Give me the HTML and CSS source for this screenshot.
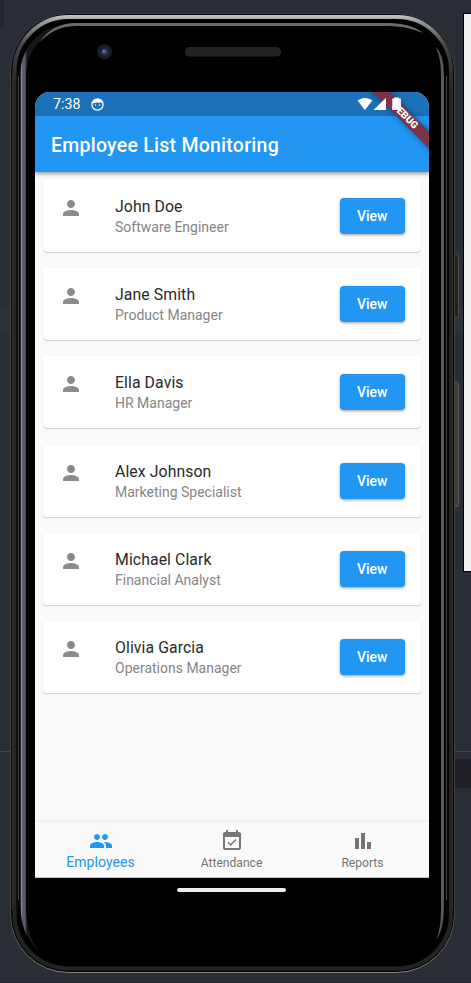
FILE: index.html
```html
<!DOCTYPE html>
<html lang="en">
<head>
<meta charset="utf-8">
<title>Employee List Monitoring</title>
<link rel="stylesheet" href="styles.css">
</head>
<body>
<svg class="device" width="471" height="983" viewBox="0 0 471 983" aria-hidden="true">
  <defs>
    <linearGradient id="rim" gradientUnits="userSpaceOnUse" x1="0" y1="13" x2="0" y2="973">
      <stop offset="0" stop-color="#3c3c3c"/><stop offset=".06" stop-color="#454443"/><stop offset=".93" stop-color="#454443"/><stop offset="1" stop-color="#85827e"/>
    </linearGradient>
    <linearGradient id="shine" gradientUnits="userSpaceOnUse" x1="0" y1="16" x2="0" y2="90">
      <stop offset="0" stop-color="#bfc4c2"/><stop offset=".06" stop-color="#9b9f9d"/><stop offset=".4" stop-color="#444"/><stop offset="1" stop-color="#232323"/>
    </linearGradient>
    <linearGradient id="left" gradientUnits="userSpaceOnUse" x1="20" y1="0" x2="27" y2="0">
      <stop offset="0" stop-color="#3c3a38"/><stop offset=".2" stop-color="#8c8883"/><stop offset=".4" stop-color="#575a68"/><stop offset=".7" stop-color="#5b5e6d"/><stop offset="1" stop-color="#15171b"/>
    </linearGradient>
  </defs>
  <rect width="471" height="983" fill="#292d36"/>
  <rect width="4" height="29" fill="#23262e"/>
  <rect y="307" width="471" height="25" fill="#2d313c"/>
  <path d="M0 751.5H471" stroke="#41454d"/>
  <path d="M450 759H471V788H450z" fill="#202126"/>
  <path d="M0 982.5H471" stroke="#202329"/>
  <rect x="463" y="13" width="8" height="559" fill="#000"/>
  <rect x="464" y="14" width="7" height="557" fill="#f0f0f0"/>
  <rect x="453.500" y="254.500" width="5" height="63" rx="2" fill="#20201f" stroke="#514e4a"/>
  <rect x="453.500" y="382.500" width="5" height="124" rx="1" fill="#3d3c3a" stroke="#5b5854"/>
  <rect x="10.5" y="13.5" width="444" height="959" rx="58" fill="#050505" stroke="url(#rim)"/>
  <rect x="14.5" y="17" width="436.500" height="951.500" rx="54" fill="none" stroke="url(#shine)" stroke-width="4"/>
  <path d="M12.500 76V910M452.500 76V910" stroke="#343332"/>
  <path d="M18.500 76V900M446.500 76V900" stroke="#454543"/>
  <rect x="20" y="20" width="425.500" height="946" rx="49" fill="#000"/>
  <path d="M40 952C28 941 20.500 928 20.500 904V74C20.500 45 44 23 75 23H384C400 23 413 25 423 33C408 27 400 26 384 26H76C49 26 26 46 26 77V904C26 928 31 942 40 952z" fill="url(#left)"/>
  <path d="M39 43C48 29 61 23 76 23H384C400 23 413 25 423 33C408 27 400 26 384 26H77C60 26 49 32 39 43z" fill="#686974"/>
  <path d="M435.500 47C442 53 444 62 444 77V904C444 921 442 932 436 940C440 931 441 922 441 904V77C441 65 440 56 435.500 47z" fill="#55565f"/>
  <circle cx="104.500" cy="51.800" r="7.500" fill="#1c1d20"/>
  <circle cx="104.500" cy="51.800" r="4.300" fill="#22284a"/>
  <circle cx="104.500" cy="51.800" r="2.500" fill="#39457c"/>
  <circle cx="103.800" cy="51" r="1" fill="#8592c4"/>
  <rect x="185" y="47" width="96" height="9.500" rx="4.500" fill="#222423"/>
</svg>

<svg class="defs" width="0" height="0" aria-hidden="true">
  <symbol id="person" viewBox="0 0 24 24"><path d="M12 12c2.210 0 4-1.790 4-4s-1.790-4-4-4-4 1.790-4 4 1.790 4 4 4zm0 2c-2.670 0-8 1.340-8 4v2h16v-2c0-2.660-5.330-4-8-4z"/></symbol>
</svg>

<div class="screen">
  <div class="ribbon-clip"><div class="ribbon">DEBUG</div></div>
  <div class="status">
    <span class="time">7:38</span>
    <svg class="face" width="13" height="13" viewBox="0 0 13 13"><circle cx="6.500" cy="6.500" r="5.600" fill="none" stroke="#fff" stroke-width="1.300"/><path d="M1 5.500C1.500 2.500 3.500 1 6.500 1S11.500 2.500 12 5.500L9.500 4.300 8 5 6.500 4.300 4 5z" fill="#fff"/><circle cx="4.500" cy="7" r=".7" fill="#fff"/><circle cx="8.500" cy="7" r=".7" fill="#fff"/></svg>
    <svg class="signals" width="46" height="14" viewBox="0 0 46 14" fill="#fff"><path d="M.5 3.500C4.800 0 11 0 15.300 3.500L7.900 12.900z"/><path d="M29 .8V13H16.500z"/><path d="M35.300 2.300V1.600H37V.5H42V1.600H43.900V13H35.300z"/></svg>
  </div>
  <header class="appbar"><h1>Employee List Monitoring</h1></header>
  <main class="list">
    <article class="card"><svg class="avatar"><use href="#person"/></svg><div class="who"><h2>John Doe</h2><p>Software Engineer</p></div><button>View</button></article>
    <article class="card"><svg class="avatar"><use href="#person"/></svg><div class="who"><h2>Jane Smith</h2><p>Product Manager</p></div><button>View</button></article>
    <article class="card"><svg class="avatar"><use href="#person"/></svg><div class="who"><h2>Ella Davis</h2><p>HR Manager</p></div><button>View</button></article>
    <article class="card"><svg class="avatar"><use href="#person"/></svg><div class="who"><h2>Alex Johnson</h2><p>Marketing Specialist</p></div><button>View</button></article>
    <article class="card"><svg class="avatar"><use href="#person"/></svg><div class="who"><h2>Michael Clark</h2><p>Financial Analyst</p></div><button>View</button></article>
    <article class="card"><svg class="avatar"><use href="#person"/></svg><div class="who"><h2>Olivia Garcia</h2><p>Operations Manager</p></div><button>View</button></article>
  </main>
  <nav class="tabs">
    <a class="tab active"><svg viewBox="0 0 24 24"><path d="M16 11c1.660 0 2.990-1.340 2.990-3S17.660 5 16 5c-1.660 0-3 1.340-3 3s1.340 3 3 3zm-8 0c1.660 0 2.990-1.340 2.990-3S9.660 5 8 5C6.340 5 5 6.340 5 8s1.340 3 3 3zm0 2c-2.330 0-7 1.170-7 3.500V19h14v-2.500c0-2.330-4.670-3.500-7-3.500zm8 0c-.29 0-.62.020-.97.050 1.160.84 1.970 1.970 1.970 3.450V19h6v-2.500c0-2.330-4.670-3.500-7-3.500z"/></svg><span>Employees</span></a>
    <a class="tab"><svg viewBox="0 0 24 24"><path d="M16.530 11.060L15.470 10l-4.880 4.880-2.120-2.120-1.060 1.060L10.590 17l5.940-5.940zM19 3h-1V1h-2v2H8V1H6v2H5c-1.110 0-1.990.9-1.990 2L3 19c0 1.100.89 2 2 2h14c1.100 0 2-.9 2-2V5c0-1.100-.9-2-2-2zm0 16H5V8h14v11z"/></svg><span>Attendance</span></a>
    <a class="tab"><svg viewBox="0 0 24 24"><path d="M4 9h4v11H4zM16 13h4v7h-4zM10 4h4v16h-4z"/></svg><span>Reports</span></a>
  </nav>
</div>
<div class="home-bar"></div>
</body>
</html>
```
FILE: styles.css
```css
* { box-sizing: border-box; }
html, body { margin: 0; height: 983px; overflow: hidden; }
body { padding: 92px 42px 0 35px; font-family: Roboto, "Liberation Sans", sans-serif; }
h1, h2, p { margin: 0; font-weight: 400; }
.device { position: absolute; left: 0; top: 0; z-index: -1; }
.defs { position: absolute; }

.screen { position: relative; display: flex; flex-direction: column; height: 786px; background: #fafafa; border-radius: 15px 15px 0 0; overflow: hidden; }

.status { display: flex; align-items: center; height: 24px; padding: 0 26.500px 0 18px; background: #1d71b8; color: #fff; flex: none; }
.time { font-size: 14.200px; line-height: 24px; }
.face { margin-left: 10.500px; }
.signals { margin-left: auto; position: relative; z-index: 3; }

.appbar { display: flex; align-items: center; height: 55.500px; padding: 3px 16px 0; background: #2196f3; color: #fff; flex: none; box-shadow: 0 2px 4px rgba(0,0,0,.36); z-index: 1; }
.appbar h1 { font-size: 19.500px; font-weight: 500; letter-spacing: .25px; white-space: nowrap; }

.ribbon-clip { position: absolute; right: 0; top: 0; width: 80px; height: 80px; overflow: hidden; z-index: 2; }
.ribbon { position: absolute; left: -4px; top: 17.500px; width: 120px; height: 12px; background: #7d3347; color: #fff; font-size: 10px; line-height: 12px; font-weight: 900; text-align: center; transform: rotate(45deg); box-shadow: 0 0 6px rgba(0,0,0,.4); }

.list { display: flex; flex-direction: column; gap: 16.300px; flex: 1; padding: 8.400px 8px 0; }
.card { display: flex; align-items: center; height: 72px; flex: none; padding: 0 16.500px 0 16px; background: #fff; border-radius: 4px; box-shadow: 0 1px 1px rgba(0,0,0,.16), 0 0 2px rgba(0,0,0,.06); }
.avatar { width: 24px; height: 24px; fill: #8b8b8b; margin: 0 32px 16px 0; }
.who { flex: 1; padding-top: 1px; }
.who h2 { font-size: 15.800px; line-height: 21px; letter-spacing: .09px; color: #2a2a2a; }
.who p { font-size: 14px; line-height: 20px; color: #858585; }
button { width: 64.500px; height: 36px; padding: 0; border: 0; border-radius: 4px; background: #2196f3; color: #fff; font: 500 14px Roboto, sans-serif; box-shadow: 0 1px 3px rgba(0,0,0,.4); }

.tabs { display: flex; height: 56px; flex: none; padding-right: 1px; background: #fafafa; box-shadow: 0 -1px 2px rgba(0,0,0,.07); border-bottom: 1px solid #c8c8c8; }
.tab { flex: 1; display: flex; flex-direction: column; align-items: center; padding-top: 7px; color: #757575; font-size: 12.100px; line-height: 16px; }
.tab svg { width: 24px; height: 24px; fill: currentColor; margin-bottom: 2px; }
.tab.active { color: #2196f3; font-size: 14px; }
.tab.active span { margin-top: -1px; letter-spacing: .05px; }

.home-bar { width: 109px; height: 4.500px; margin: 9.500px auto 0 142px; border-radius: 3px; background: #eee; }
```
